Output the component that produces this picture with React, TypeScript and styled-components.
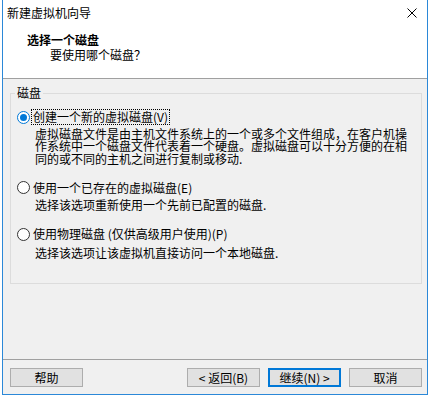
import React from 'react';
import styled, { createGlobalStyle } from 'styled-components';

const GlobalStyle = createGlobalStyle`
  html, body {
    margin: 0;
    padding: 0;
    background: #ffffff;
  }
  body {
    font-family: "Noto Sans CJK SC", "Liberation Sans", sans-serif;
    font-size: 12px;
    color: #000;
  }
`;

const Window = styled.div`
  box-sizing: border-box;
  margin-left: 2px;
  width: 426px;
  height: 395px;
  border: 1px solid #2b88d8;
  border-top: none;
  display: flex;
  flex-direction: column;
  background: #ffffff;
`;

const TitleBar = styled.div`
  height: 28px;
  flex-shrink: 0;
  display: flex;
  align-items: center;
  justify-content: space-between;
  padding: 0 10px 2px 4px;
  box-sizing: border-box;
  font-size: 12px;
  line-height: 14px;
`;

const CloseIcon = styled.svg`
  width: 10px;
  height: 10px;
  display: block;
`;

const Header = styled.div`
  height: 51px;
  flex-shrink: 0;
  box-sizing: border-box;
  border-bottom: 1px solid #a0a0a0;
  padding: 5px 0 0 24px;
`;

const HeaderTitle = styled.div`
  font-weight: 700;
  line-height: 14px;
`;

const HeaderSubtitle = styled.div`
  margin: 1px 0 0 23px;
  line-height: 14px;
`;

const Body = styled.div`
  flex: 1;
  display: flex;
  flex-direction: column;
  background: #f0f0f0;
`;

const GroupBox = styled.div`
  position: relative;
  margin: 14px 5px 0 7px;
  height: 191px;
  box-sizing: border-box;
  border: 1px solid #dcdcdc;
  padding: 16px 0 0 6px;
  display: flex;
  flex-direction: column;
  gap: 16px;
`;

const GroupLabel = styled.span`
  position: absolute;
  top: -8px;
  left: 4px;
  padding: 0 2px;
  background: #f0f0f0;
  line-height: 14px;
`;

const Option = styled.div`
  display: flex;
  flex-direction: column;
`;

const OptionRow = styled.div`
  display: flex;
  align-items: center;
  height: 14px;
`;

const Radio = styled.span<{ $checked?: boolean }>`
  box-sizing: border-box;
  width: 13px;
  height: 13px;
  border-radius: 50%;
  border: 1px solid ${p => (p.$checked ? '#0078d7' : '#333333')};
  background: #ffffff;
  display: flex;
  align-items: center;
  justify-content: center;
  flex-shrink: 0;

  &::after {
    content: '';
    width: 7px;
    height: 7px;
    border-radius: 50%;
    background: #0078d7;
    display: ${p => (p.$checked ? 'block' : 'none')};
  }
`;

const OptionLabel = styled.span<{ $focused?: boolean }>`
  margin-left: 2px;
  padding: 0 1px;
  line-height: 14px;
  outline: ${p => (p.$focused ? '1px dotted #000' : 'none')};
  outline-offset: 0;
`;

const Description = styled.div<{ $top: number }>`
  margin: ${p => p.$top}px 0 0 18px;
  width: 376px;
  line-height: 12.25px;
`;

const Spacer = styled.div`
  flex: 1;
`;

const Footer = styled.div`
  height: 35px;
  box-sizing: border-box;
  border-top: 1px solid #a0a0a0;
  padding: 8px 5px 0 7px;
  display: flex;
  align-items: flex-start;
`;

const Button = styled.button<{ $default?: boolean }>`
  box-sizing: border-box;
  width: 73px;
  height: 19px;
  padding: 0;
  margin: 0;
  background: #e1e1e1;
  border: ${p => (p.$default ? '2px solid #0078d7' : '1px solid #adadad')};
  font-family: "Noto Sans CJK SC", "Liberation Sans", sans-serif;
  font-size: 12px;
  line-height: 14px;
  color: #000;
  display: flex;
  align-items: center;
  justify-content: center;
`;

const ButtonGroup = styled.div`
  margin-left: auto;
  display: flex;
  gap: 8px;
`;

const options = [
  {
    label: '创建一个新的虚拟磁盘(V)',
    desc: '虚拟磁盘文件是由主机文件系统上的一个或多个文件组成，在客户机操作系统中一个磁盘文件代表着一个硬盘。虚拟磁盘可以十分方便的在相同的或不同的主机之间进行复制或移动.',
    checked: true,
    top: 4,
  },
  {
    label: '使用一个已存在的虚拟磁盘(E)',
    desc: '选择该选项重新使用一个先前已配置的磁盘.',
    checked: false,
    top: 4,
  },
  {
    label: '使用物理磁盘 (仅供高级用户使用)(P)',
    desc: '选择该选项让该虚拟机直接访问一个本地磁盘.',
    checked: false,
    top: 6,
  },
];

const App: React.FC = () => {
  return (
    <>
      <GlobalStyle />
      <Window>
        <TitleBar>
          <span>新建虚拟机向导</span>
          <CloseIcon viewBox="0 0 10 10">
            <path d="M0.5 0.5 L9.5 9.5 M9.5 0.5 L0.5 9.5" stroke="#000" strokeWidth="1" fill="none" />
          </CloseIcon>
        </TitleBar>
        <Header>
          <HeaderTitle>选择一个磁盘</HeaderTitle>
          <HeaderSubtitle>要使用哪个磁盘？</HeaderSubtitle>
        </Header>
        <Body>
          <GroupBox>
            <GroupLabel>磁盘</GroupLabel>
            {options.map((opt, i) => (
              <Option key={i}>
                <OptionRow>
                  <Radio $checked={opt.checked} />
                  <OptionLabel $focused={opt.checked}>{opt.label}</OptionLabel>
                </OptionRow>
                <Description $top={opt.top}>{opt.desc}</Description>
              </Option>
            ))}
          </GroupBox>
          <Spacer />
          <Footer>
            <Button>帮助</Button>
            <ButtonGroup>
              <Button>&lt; 返回(B)</Button>
              <Button $default>继续(N) &gt;</Button>
              <Button>取消</Button>
            </ButtonGroup>
          </Footer>
        </Body>
      </Window>
    </>
  );
};

export default App;
